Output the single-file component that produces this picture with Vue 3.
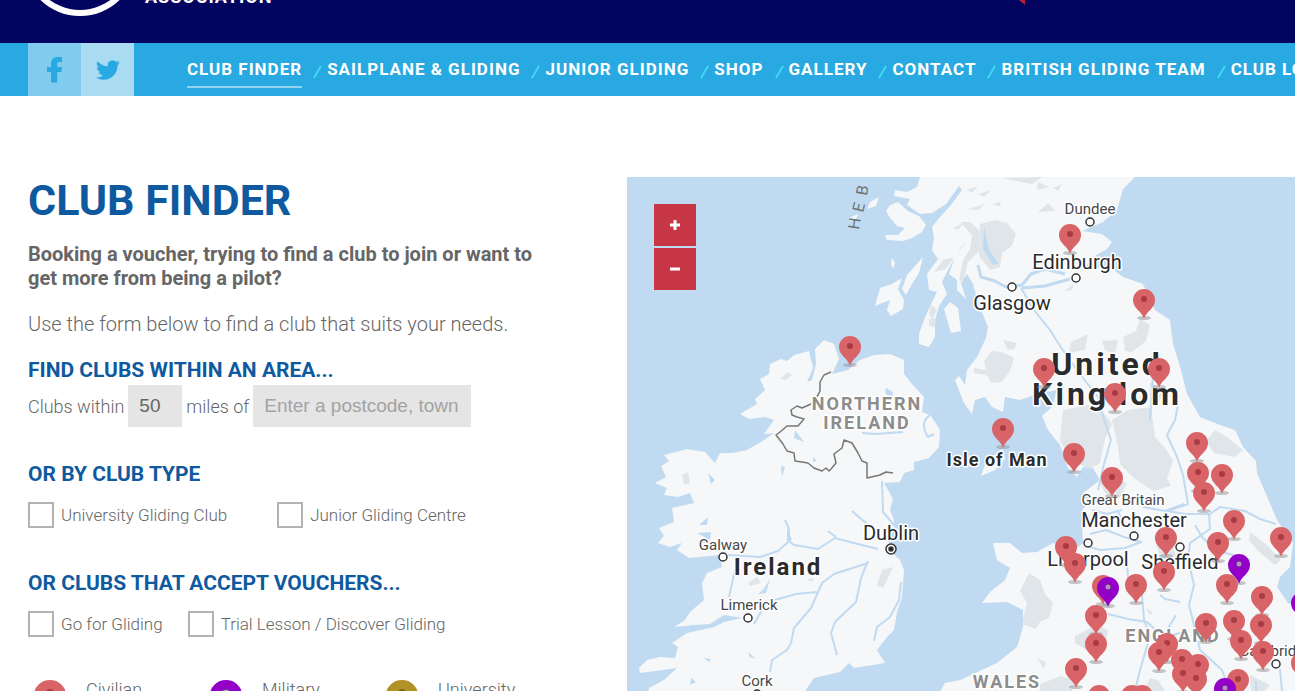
<script setup>
    import { ref } from 'vue';

    const links = ['Club Finder', 'Sailplane & Gliding', 'Junior Gliding', 'Shop', 'Gallery', 'Contact', 'British Gliding Team', 'Club Login'];

    const miles = ref('50');
    const postcode = ref('');

    const clubTypes = ref([
        { id: 'university', label: 'University Gliding Club', checked: false },
        { id: 'junior', label: 'Junior Gliding Centre', checked: false },
    ]);

    const vouchers = ref([
        { id: 'go', label: 'Go for Gliding', checked: false },
        { id: 'trial', label: 'Trial Lesson / Discover Gliding', checked: false },
    ]);

    const legend = [
        { name: 'Civilian', type: 'civilian' },
        { name: 'Military', type: 'military' },
        { name: 'University', type: 'university' },
    ];

    // x, y of the dot inside the pin, third value marks a military club
    const pins = [
        [1070, 234], [1144, 299], [850, 346], [1044, 368], [1159, 368], [1115, 393], [1003, 428],
        [1197, 442], [1074, 453], [1198, 472], [1222, 474], [1112, 477], [1204, 492], [1234, 520],
        [1281, 537], [1166, 537], [1218, 542], [1066, 546], [1075, 563], [1239, 564, 1], [1164, 571],
        [1136, 584], [1227, 584], [1103, 585], [1108, 587, 1], [1262, 596], [1302, 602, 1], [1096, 615],
        [1234, 620], [1206, 623], [1261, 624], [1241, 640], [1096, 643], [1167, 643], [1263, 651],
        [1159, 652], [1182, 659], [1302, 662], [1198, 664], [1076, 668], [1183, 673], [1196, 678],
        [1238, 679], [1225, 688, 1], [1099, 695], [1132, 695], [1142, 695],
    ];

    const towns = [
        { name: 'Dundee', x: 1090, y: 214, cx: 1090, cy: 222, size: 'small' },
        { name: 'Edinburgh', x: 1077, y: 269, cx: 1076, cy: 278, size: 'big' },
        { name: 'Glasgow', x: 1012, y: 310, cx: 1012, cy: 287, size: 'big' },
        { name: 'Manchester', x: 1134, y: 527, cx: 1134, cy: 536, size: 'big' },
        { name: 'Liverpool', x: 1088, y: 566, cx: 1088, cy: 543, size: 'big' },
        { name: 'Sheffield', x: 1180, y: 569, cx: 1180, cy: 547, size: 'big' },
        { name: 'Galway', x: 723, y: 550, cx: 723, cy: 557, size: 'small' },
        { name: 'Limerick', x: 749, y: 610, cx: 748, cy: 618, size: 'small' },
        { name: 'Cork', x: 757, y: 686, cx: 757, cy: 694, size: 'small' },
        { name: 'Cambridge', x: 1276, y: 656, cx: 1276, cy: 664, size: 'small' },
    ];
</script>

<template>
    <div class="page">
        <header class="header">
            <a class="brand" href="#">
                <svg class="brand-logo" viewBox="0 0 114 114">
                    <circle cx="57" cy="57" r="57" fill="#fff" />
                    <circle cx="57" cy="57" r="51" fill="#03045f" />
                </svg>
                <span class="brand-name">ASSOCIATION</span>
            </a>
            <svg class="header-flag" viewBox="0 0 12 10"><path d="M0 0h12v10z" fill="#b5213f" /></svg>
        </header>

        <nav class="nav">
            <div class="social">
                <a class="social-link facebook" href="#" aria-label="Facebook">
                    <svg viewBox="0 0 28 28"><path d="M10 26.500V16H6V11H10V7.800C10 3.400 12.600 1 16.800 1C18.600 1 20.500 1.200 21 1.300V6H18.600C16.700 6 16.200 6.900 16.200 8.200V11H21L20.300 16H16.200V26.500Z" /></svg>
                </a>
                <a class="social-link twitter" href="#" aria-label="Twitter">
                    <svg viewBox="0 0 24 24"><path d="M23.950 4.570a10 10 0 0 1-2.820.770 4.960 4.960 0 0 0 2.160-2.720c-.950.550-2 .950-3.130 1.180a4.920 4.920 0 0 0-8.380 4.480C7.690 8.090 4.070 6.130 1.640 3.160a4.930 4.930 0 0 0 1.520 6.570 4.900 4.900 0 0 1-2.230-.610v.060a4.920 4.920 0 0 0 3.950 4.830 4.900 4.900 0 0 1-2.210.080 4.940 4.940 0 0 0 4.600 3.420A9.870 9.870 0 0 1 0 19.540a14 14 0 0 0 7.550 2.210c9.050 0 14-7.500 14-13.980 0-.210 0-.420-.020-.630a9.940 9.940 0 0 0 2.460-2.550z" /></svg>
                </a>
            </div>
            <ul class="nav-list">
                <li class="nav-item" v-for="(link, index) in links" :key="link">
                    <svg v-if="index > 0" class="nav-slash" viewBox="0 0 25 14"><path d="M12 13L19 1" /></svg>
                    <a href="#" :class="(index == 0) ? 'nav-link nav-active' : 'nav-link'">{{ link }}</a>
                </li>
            </ul>
        </nav>

        <main class="content">
            <form class="finder" @submit.prevent>
                <h1>Club Finder</h1>
                <p class="intro">Booking a voucher, trying to find a club to join or want to get more from being a pilot?</p>
                <p class="lead">Use the form below to find a club that suits your needs.</p>

                <h3>Find clubs within an area...</h3>
                <div class="area-row">
                    <label for="miles">Clubs within</label>
                    <input id="miles" class="field field-miles" type="text" v-model="miles">
                    <label for="postcode">miles of</label>
                    <input id="postcode" class="field field-postcode" type="text" placeholder="Enter a postcode, town or city" v-model="postcode">
                </div>

                <h3>Or by club type</h3>
                <div class="check-row check-wide">
                    <label class="check" v-for="item in clubTypes" :key="item.id" :for="item.id">
                        <input type="checkbox" :id="item.id" v-model="item.checked">
                        {{ item.label }}
                    </label>
                </div>

                <h3>Or clubs that accept vouchers...</h3>
                <div class="check-row">
                    <label class="check" v-for="item in vouchers" :key="item.id" :for="item.id">
                        <input type="checkbox" :id="item.id" v-model="item.checked">
                        {{ item.label }}
                    </label>
                </div>

                <ul class="legend">
                    <li v-for="item in legend" :key="item.type">
                        <svg class="legend-pin" :class="item.type" viewBox="-16 -13 32 40">
                            <path d="M0 25C-4 14-16 11-16 2A16 15 0 0 1 16 2C16 11 4 14 0 25Z" />
                            <circle class="pin-dot" cx="0" cy="0" r="4" />
                        </svg>
                        {{ item.name }}
                    </li>
                </ul>
            </form>

            <section class="map">
                <svg class="map-canvas" viewBox="627 177 668 514" preserveAspectRatio="xMinYMin slice">
                    <g class="land">
                        <!-- Ireland -->
                        <path d="M824 340L815 349L816 364L812 380L807 382L813 368L809 351L794 355L787 361L781 359L770 364L769 374L760 379L765 390L755 399L757 404L740 414L749 419L765 417L774 420L764 434L774 433L761 442L747 450L733 453L720 453L715 463L705 452L687 449L664 455L669 461L661 466L666 477L655 483L667 488L664 495L678 497L690 493L694 503L672 508L674 522L659 528L664 536L658 543L670 547L682 543L677 550L689 558L720 555L722 567L707 573L702 583L704 600L690 612L685 620L674 627L694 625L710 624L724 615L742 618L724 622L714 627L687 633L672 643L678 647L675 658L660 657L647 660L639 668L640 673L677 668L664 680L649 688L647 700H800L805 691L814 678L840 672L849 663L854 668L885 663L877 650L887 637L894 630L897 612L902 597L904 570L900 560L892 553L888 540L894 530L894 520L890 510L893 499L884 483L900 482L904 473L914 470L914 462L929 458L939 447L940 430L935 422L930 415L922 412L924 397L912 384L904 374L904 360L890 354L874 355L860 360L848 370L832 374L839 359L834 344Z" />
                        <!-- Great Britain -->
                        <path d="M920 177L917 187L907 192L895 190L894 196L910 199L907 205L920 214L932 213L946 204L959 186L962 190L951 205L940 217L932 227L934 237L932 250L938 259L927 274L929 290L937 292L930 306L924 320L919 334L919 344L929 347L935 337L935 320L939 306L947 294L942 282L949 268L961 247L966 241L955 257L949 274L957 280L957 290L966 299L961 283L967 274L973 284L977 298L981 310L988 327L986 338L977 357L967 370L965 385L959 376L955 380L960 393L964 403L972 414L975 400L985 397L992 407L1003 412L1005 397L1020 400L1037 394L1057 390L1052 407L1042 416L1048 430L1060 445L1068 468L1077 477L1083 467L1093 468L1100 480L1083 493L1092 500L1082 510L1090 517L1082 527L1083 543L1070 553L1062 545L1053 543L1037 552L1022 553L1010 543L993 543L997 560L1010 568L1005 580L990 592L982 603L1007 602L1023 610L1023 627L1017 647L997 663L960 680L945 683L935 700H1310V610L1288 603L1277 587L1280 577L1290 567L1293 543L1277 520L1257 473L1256 461L1243 447L1235 430L1220 425L1200 417L1187 394L1181 370L1173 344L1170 320L1155 310L1143 284L1123 277L1110 267L1085 268L1093 257L1107 249L1112 242L1102 234L1082 231L1103 222L1117 210L1123 189L1135 177Z" />
                        <path d="M890 205L898 202L908 211L919 216L926 225L922 232L912 238L903 241L887 240L885 235L898 235L905 228L897 226L890 218L886 211Z" />
                        <path d="M923 257L919 273L912 284L906 295L902 289L907 275Z" />
                        <path d="M902 278L898 289L904 300L903 309L891 316L887 310L890 300L875 306L880 288L892 284Z" />
                        <path d="M892 258L895 263L893 269L891 264Z" />
                        <path d="M950 302L958 308L961 331L951 333L944 309Z" />
                        <path d="M870 202L879 197L876 206L867 209ZM849 218L858 214L856 219L850 221Z" />
                        <path d="M1002 449L1005 459L995 470L981 476L986 462Z" />
                    </g>

                    <g class="terrain">
                        <path d="M980 224L995 220L1007 223L1016 234L1012 246L1002 253L1000 267L990 270L979 256Z" />
                        <path d="M960 222L972 235L970 249L963 260L959 280L963 283L968 262L979 251L980 231L970 222Z" />
                        <path d="M943 260L954 257L946 269L934 272ZM931 304L937 310L932 319L929 313ZM929 319L936 318L935 327L929 326Z" />
                        <path d="M984 361L992 351L1002 352L1014 358L1010 371L1002 382L991 383L987 375L974 373V368L986 370ZM1003 340L1017 343L1014 349L1008 350Z" />
                        <path d="M1071 342L1088 334L1085 350L1073 352L1068 357ZM1102 341L1118 340L1115 354L1105 350Z" />
                        <path d="M1140 319L1150 325L1146 341L1132 352L1125 351L1123 337L1136 331Z" />
                        <path d="M1063 410L1088 405L1103 412L1112 424L1105 439L1100 463L1090 469L1073 461L1060 441Z" />
                        <path d="M1112 420L1128 410L1151 407L1155 437L1166 449L1173 461L1167 478L1171 486L1153 491L1134 478L1120 464L1118 447Z" />
                        <path d="M1215 430L1227 437L1243 450L1235 457L1214 453L1206 441ZM1098 480L1109 475L1127 483L1120 498L1105 493Z" />
                        <path d="M1150 382L1164 390L1158 404L1151 406Z" />
                        <path d="M1029 573L1040 580L1045 594L1053 603L1049 618L1040 622L1036 629L1022 624L1027 603L1020 591Z" />
                        <path d="M1075 636L1096 625L1108 630L1106 642L1087 650L1075 643ZM1037 658L1046 662L1044 669ZM1040 684L1061 676L1075 681L1072 691H1040Z" />
                        <path d="M1250 532L1267 545L1281 560L1275 565L1258 551L1249 540ZM1154 537L1166 536L1179 560L1174 573L1162 565Z" />
                        <path d="M1126 691L1146 686L1150 678L1158 680L1165 691ZM1250 675L1270 685L1264 691H1251ZM1145 606L1153 613L1150 615Z" />
                        <path d="M1038 212L1048 203L1055 211ZM1001 178L1042 177L1032 184ZM953 228L963 223L958 230ZM967 190L978 186L972 193ZM968 209L985 204L978 210ZM992 205L1001 201L1000 206ZM1038 182L1049 187L1037 190ZM1053 188L1062 184L1058 191ZM978 194L991 190L984 197Z" />
                        <path d="M780 379L788 372L792 375L786 380ZM682 475L688 472L690 483L684 485ZM748 583L757 577L761 583L750 586ZM882 570L893 567L889 576L883 588L877 585ZM1064 291L1074 284L1072 290ZM807 579L815 578L811 582Z" />
                    </g>

                    <g class="water">
                        <path d="M848 367L837 373L842 362ZM886 388L893 392L892 399L885 393ZM795 430L804 442L794 438ZM813 457L817 461L813 462ZM781 466L785 467L782 477ZM708 473L715 480L711 484ZM708 517L707 525L699 525ZM697 533L711 532L710 540ZM770 579L766 593L758 594L763 590ZM787 528L792 540L787 542ZM748 652L756 659L750 657ZM704 658L711 659L709 662ZM691 678L696 682L690 685ZM984 226L989 250L999 264L993 265L983 249Z" />
                    </g>

                    <g class="river">
                        <path d="M728 555L760 557L778 551L789 541L794 545L818 549L835 538L850 542L878 549" />
                        <path d="M785 520L789 529L789 541M852 511L867 524M882 481L883 512L894 525M828 531L836 537" />
                        <path d="M735 570L729 597M775 600L796 594L818 592L822 583L834 574L868 563M818 592L811 608L794 628L791 643L787 650L772 660L770 672" />
                        <path d="M868 561L861 578L856 602L835 622L831 633L837 655M901 582L899 600L890 617L877 627L874 641" />
                        <path d="M862 433L876 434L903 432M930 415Q919 423 928 437L934 434M754 624L762 610" />
                        <path d="M978 265L981 277L995 281L1006 287L1022 285L1031 274L1045 269L1065 274M1022 288L1045 286L1070 279" stroke-width="3" />
                        <path d="M1021 288L1034 310L1050 330L1062 349L1083 378L1098 397L1104 419L1111 440L1104 464L1098 490" />
                        <path d="M1178 405L1175 420L1167 435L1177 457L1183 475L1188 504L1168 511L1185 514L1210 514L1220 507L1245 511L1260 519L1276 524" />
                        <path d="M1209 514L1210 529L1190 543L1188 559L1194 585L1189 605L1194 625L1200 650L1222 670L1230 691" />
                        <path d="M1090 534L1106 530L1124 537L1141 542L1125 548L1100 550L1087 546M1127 563L1128 578L1142 595L1144 620L1150 636L1140 670L1135 691" />
                        <path d="M1108 614L1128 619L1147 622L1164 638L1183 632M1167 630L1176 615M1160 595L1165 599L1180 602M1280 669L1282 691M1256 681V691M1117 510L1122 519M1143 507L1165 511L1184 504" />
                        <path d="M1065 478L1080 462M1195 525L1202 537L1215 550L1250 560M1153 375L1150 420M1092 510L1107 514L1122 510" />
                    </g>

                    <path class="border" d="M831 372L824 375L820 382V391L818 395L815 399M811 404L802 408L797 406L791 410L792 415L797 417L804 419L798 426L787 426L780 432L776 435L783 444L787 451L794 453L795 461L802 462L808 463L814 468L822 471L826 468L829 471L831 469L836 463L834 454L842 448L844 440L852 443L858 453L862 461L867 463V478L880 475L886 472L893 473" />

                    <g class="label">
                        <g class="isles">
                            <text transform="translate(859 230) rotate(-81)">H</text>
                            <text transform="translate(863 213) rotate(-76)">E</text>
                            <text transform="translate(867 196) rotate(-81)">B</text>
                        </g>
                        <text class="region" x="867" y="410">NORTHERN</text>
                        <text class="region" x="867" y="429">IRELAND</text>
                        <text class="region" x="1173" y="642">ENGLAND</text>
                        <text class="region" x="1007" y="688">WALES</text>
                        <text class="country" x="778" y="575">Ireland</text>
                        <text class="island" x="997" y="466">Isle of Man</text>
                        <text class="kingdom" x="1107" y="375">United</text>
                        <text class="kingdom" x="1107" y="405">Kingdom</text>
                        <text class="great" x="1123" y="505">Great Britain</text>
                        <text class="big" x="891" y="540">Dublin</text>
                        <text v-for="town in towns" :key="town.name" :class="town.size" :x="town.x" :y="town.y">{{ town.name }}</text>
                    </g>
                    <g class="town-dot">
                        <circle v-for="town in towns" :key="town.name" :cx="town.cx" :cy="town.cy" r="4" />
                        <circle cx="891" cy="549" r="5" />
                        <circle class="capital" cx="891" cy="549" r="2" />
                    </g>

                    <g v-for="(pin, index) in pins" :key="index" class="pin" :class="pin[2] ? 'military' : 'civilian'" :transform="`translate(${pin[0]} ${pin[1]})`">
                        <ellipse class="pin-shadow" cx="0" cy="19" rx="7" ry="2" />
                        <path d="M0 20C-2 12-11 10-11 1A11 11 0 0 1 11 1C11 10 2 12 0 20Z" />
                        <circle class="pin-dot" cx="0" cy="0" r="3" />
                    </g>
                </svg>

                <div class="zoom">
                    <button type="button" aria-label="Zoom in"><svg viewBox="0 0 12 12"><path d="M1 6H11M6 1V11" /></svg></button>
                    <button type="button" aria-label="Zoom out"><svg viewBox="0 0 12 12"><path d="M1 6H11" /></svg></button>
                </div>
            </section>
        </main>
    </div>
</template>

<style>
    body {
        margin: 0;
        background: #fff;
    }
</style>

<style scoped>
    .page {
        height: 100vh;
        display: flex;
        flex-direction: column;
        overflow: hidden;
        font-family: Roboto, "Liberation Sans", sans-serif;
        color: #666;
    }

    .header {
        flex: none;
        display: flex;
        justify-content: space-between;
        align-items: flex-end;
        height: 43px;
        box-sizing: border-box;
        padding: 0 270px 27px 23px;
        background: #03045f;
    }

    .brand {
        display: flex;
        align-items: flex-end;
        gap: 8px;
        color: #fff;
        text-decoration: none;
    }

    .brand-logo {
        width: 114px;
        height: 114px;
    }

    .brand-name {
        padding-bottom: 9px;
        font-size: 18px;
        line-height: 20px;
        font-weight: 700;
        letter-spacing: 1px;
    }

    .header-flag {
        width: 12px;
        height: 10px;
        padding-bottom: 11px;
    }

    .nav {
        flex: none;
        display: flex;
        height: 53px;
        padding-left: 28px;
        background: #29a9e1;
    }

    .social {
        flex: none;
        display: flex;
        margin-right: 53px;
    }

    .social-link {
        display: flex;
        align-items: center;
        justify-content: center;
        width: 53px;
    }

    .social-link svg {
        width: 28px;
        height: 28px;
        fill: #29a9e1;
    }

    .facebook {
        background: #7fccee;
    }

    .twitter {
        background: #a9dcf3;
    }

    .social-link.twitter svg {
        width: 24px;
        height: 24px;
    }

    .nav-list {
        display: flex;
        margin: 0;
        padding: 0;
        list-style: none;
        white-space: nowrap;
    }

    .nav-item {
        display: flex;
        align-items: flex-start;
        padding-top: 10px;
    }

    .nav-link {
        padding-bottom: 1px;
        color: #fff;
        font-size: 17px;
        line-height: 32px;
        font-weight: 700;
        letter-spacing: 1px;
        text-decoration: none;
        text-transform: uppercase;
    }

    .nav-active {
        border-bottom: 2px solid #94d4f0;
    }

    .nav-slash {
        width: 25px;
        height: 14px;
        padding-top: 12px;
        fill: none;
        stroke: #3fd8f5;
        stroke-width: 2;
    }

    .content {
        flex: 1;
        min-height: 0;
        display: grid;
        grid-template-columns: 544px minmax(0, 1fr);
        grid-template-rows: minmax(0, 1fr);
        gap: 55px;
        padding: 81px 0 0 28px;
    }

    h1 {
        margin: 0 0 19px;
        color: #0f5a9f;
        font-size: 43px;
        line-height: 46px;
        font-weight: 700;
        text-transform: uppercase;
    }

    .intro {
        max-width: 528px;
        margin: 0 0 22px;
        font-size: 20px;
        line-height: 24px;
        font-weight: 700;
    }

    .lead {
        margin: 0 0 22px;
        font-size: 20px;
        line-height: 24px;
        font-weight: 300;
    }

    h3 {
        margin: 0;
        color: #0f5a9f;
        font-size: 21px;
        line-height: 24px;
        font-weight: 700;
        text-transform: uppercase;
    }

    .area-row {
        display: flex;
        align-items: center;
        gap: 4px;
        margin: 3px 0 35px;
        font-size: 18px;
        font-weight: 300;
    }

    .field {
        height: 42px;
        box-sizing: border-box;
        padding: 0 11px;
        border: 0;
        border-radius: 0;
        background: #e5e5e5;
        color: #666;
        font-family: "Liberation Sans", Arial, sans-serif;
        font-size: 19px;
    }

    .field::placeholder {
        color: #a3a3a3;
    }

    .field-miles {
        width: 54px;
    }

    .field-postcode {
        width: 218px;
    }

    .check-row {
        display: flex;
        gap: 25px;
        margin: 16px 0 43px;
    }

    .check-wide {
        gap: 50px;
    }

    .check {
        display: flex;
        align-items: center;
        gap: 7px;
        font-size: 17px;
        line-height: 26px;
        font-weight: 300;
    }

    .check input {
        appearance: none;
        width: 26px;
        height: 26px;
        margin: 0;
        border: 2px solid #b3b3b3;
        background: #fff;
    }

    .legend {
        display: grid;
        grid-template-columns: repeat(3, 176px);
        margin: 0;
        padding: 0 0 0 6px;
        list-style: none;
        font-size: 18px;
        line-height: 20px;
        font-weight: 300;
    }

    .legend li {
        display: flex;
        align-items: flex-start;
        gap: 20px;
    }

    .legend-pin {
        width: 32px;
        height: 40px;
    }

    .civilian {
        fill: #d96467;
    }

    .military {
        fill: #9400c8;
    }

    .university {
        fill: #b29127;
    }

    .pin-dot {
        fill: #a93c43;
    }

    .military .pin-dot {
        fill: #b98fc9;
        stroke: #6b2a8c;
    }

    .university .pin-dot {
        fill: #7d6415;
    }

    .pin-shadow {
        fill: #8d9498;
        opacity: .5;
    }

    .map {
        position: relative;
        overflow: hidden;
        background: #c0daf1;
    }

    .map-canvas {
        display: block;
        width: 100%;
        height: 100%;
    }

    .land {
        fill: #f6f7f8;
    }

    .terrain {
        fill: #e0e5ea;
    }

    .water {
        fill: #c0daf1;
    }

    .river {
        fill: none;
        stroke: #c0daf1;
        stroke-width: 2;
        stroke-linejoin: round;
    }

    .border {
        fill: none;
        stroke: #777;
        stroke-width: 1.5;
        stroke-linejoin: round;
    }

    .label text {
        fill: #292b2d;
        stroke: #fff;
        stroke-width: 3px;
        stroke-linejoin: round;
        paint-order: stroke;
        text-anchor: middle;
    }

    .label .small {
        font-size: 15px;
        fill: #454749;
    }

    .label .great {
        font-size: 15px;
        fill: #454749;
    }

    .label .big {
        font-size: 20px;
    }

    .label .region {
        font-size: 18px;
        font-weight: 700;
        letter-spacing: 2px;
        fill: #8c8c8c;
    }

    .label .country {
        font-size: 24px;
        font-weight: 700;
        letter-spacing: 2px;
    }

    .label .island {
        font-size: 18px;
        font-weight: 700;
        letter-spacing: 1px;
    }

    .label .kingdom {
        font-size: 32px;
        font-weight: 700;
        letter-spacing: 3px;
    }

    .label .isles text {
        font-size: 16px;
        fill: #6d7478;
        stroke: none;
        text-anchor: start;
    }

    .town-dot {
        fill: #fff;
        stroke: #333;
        stroke-width: 1.5;
    }

    .town-dot .capital {
        fill: #222;
    }

    .zoom {
        position: absolute;
        top: 27px;
        left: 27px;
        display: grid;
        gap: 2px;
    }

    .zoom button {
        display: flex;
        align-items: center;
        justify-content: center;
        width: 42px;
        height: 42px;
        padding: 0;
        border: 0;
        background: #c63645;
    }

    .zoom svg {
        width: 12px;
        height: 12px;
        fill: none;
        stroke: #fff;
        stroke-width: 3;
    }
</style>
